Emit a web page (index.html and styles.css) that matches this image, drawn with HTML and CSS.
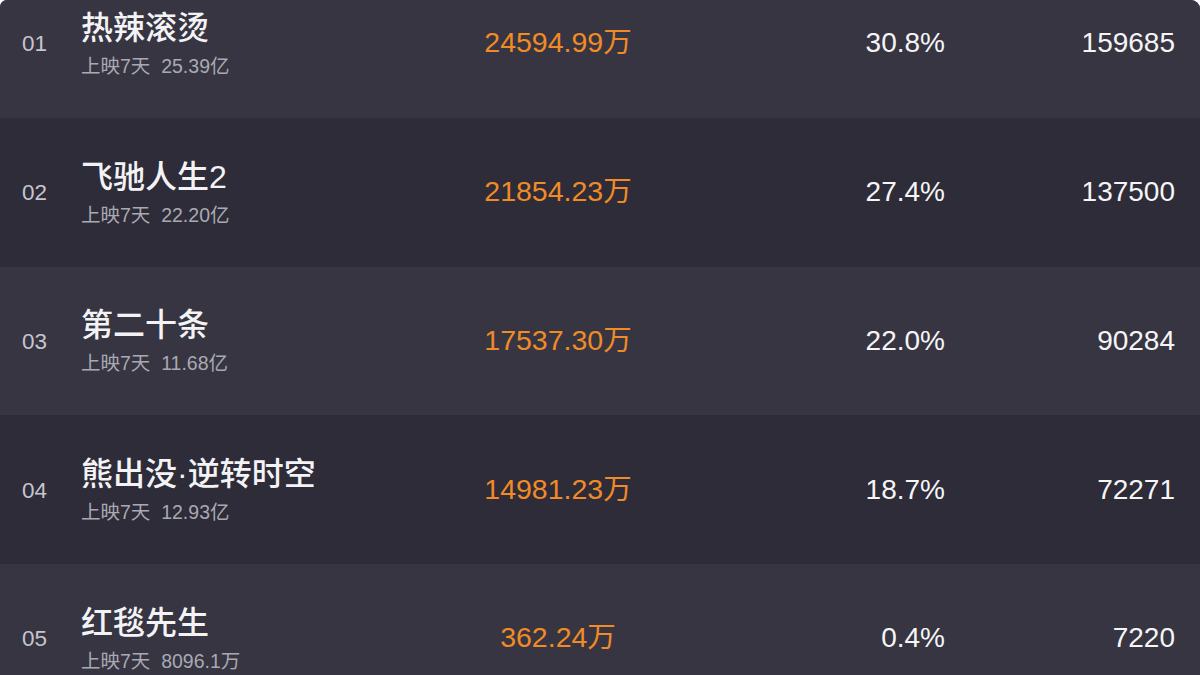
FILE: index.html
```html
<!DOCTYPE html>
<html lang="zh">
<head>
<meta charset="utf-8">
<link rel="stylesheet" href="styles.css">
</head>
<body>
<div class="card">
  <div class="list">
    <div class="row odd">
      <div class="rank">01</div>
      <div class="movie"><div class="title">热辣滚烫</div><div class="sub">上映7天&nbsp;&nbsp;25.39亿</div></div>
      <div class="box">24594.99万</div>
      <div class="pct">30.8%</div>
      <div class="count">159685</div>
    </div>
    <div class="row even">
      <div class="rank">02</div>
      <div class="movie"><div class="title">飞驰人生2</div><div class="sub">上映7天&nbsp;&nbsp;22.20亿</div></div>
      <div class="box">21854.23万</div>
      <div class="pct">27.4%</div>
      <div class="count">137500</div>
    </div>
    <div class="row odd">
      <div class="rank">03</div>
      <div class="movie"><div class="title">第二十条</div><div class="sub">上映7天&nbsp;&nbsp;11.68亿</div></div>
      <div class="box">17537.30万</div>
      <div class="pct">22.0%</div>
      <div class="count">90284</div>
    </div>
    <div class="row even">
      <div class="rank">04</div>
      <div class="movie"><div class="title">熊出没·逆转时空</div><div class="sub">上映7天&nbsp;&nbsp;12.93亿</div></div>
      <div class="box">14981.23万</div>
      <div class="pct">18.7%</div>
      <div class="count">72271</div>
    </div>
    <div class="row odd">
      <div class="rank">05</div>
      <div class="movie"><div class="title">红毯先生</div><div class="sub">上映7天&nbsp;&nbsp;8096.1万</div></div>
      <div class="box">362.24万</div>
      <div class="pct">0.4%</div>
      <div class="count">7220</div>
    </div>
  </div>
</div>
</body>
</html>
```
FILE: styles.css
```css
html, body {
  margin: 0;
  padding: 0;
  background: #ffffff;
  overflow: hidden;
}
body {
  width: 1200px;
  height: 675px;
  font-family: "Liberation Sans", "Noto Sans CJK SC", sans-serif;
}
.card {
  width: 1200px;
  height: 675px;
  overflow: hidden;
  border-radius: 7px 9px 0 0;
  background: #35343f;
}
.list {
  margin-top: -31px;
}
.row {
  height: 148.75px;
  display: flex;
  align-items: center;
  padding: 0 25px 0 22px;
  box-sizing: border-box;
}
.odd { background: #363541; }
.even { background: #2d2c38; }
.rank {
  width: 59px;
  font-size: 22.5px;
  line-height: 26px;
  color: #c6c6cd;
  padding-top: 2px;
}
.movie {
  width: 300px;
  margin-top: 0;
}
.title {
  font-size: 32px;
  line-height: 38px;
  font-weight: 500;
  color: #f3f3f5;
  white-space: nowrap;
}
.sub {
  margin-top: 7px;
  font-size: 19.5px;
  line-height: 24px;
  color: #a9a9b3;
  white-space: nowrap;
}
.box {
  width: 354px;
  text-align: center;
  font-size: 28.5px;
  line-height: 32px;
  color: #f08b27;
  margin-top: -2px;
}
.pct {
  width: 210px;
  text-align: right;
  font-size: 28px;
  line-height: 32px;
  color: #f5f5f7;
}
.count {
  width: 230px;
  text-align: right;
  font-size: 28px;
  line-height: 32px;
  color: #f5f5f7;
}
```
